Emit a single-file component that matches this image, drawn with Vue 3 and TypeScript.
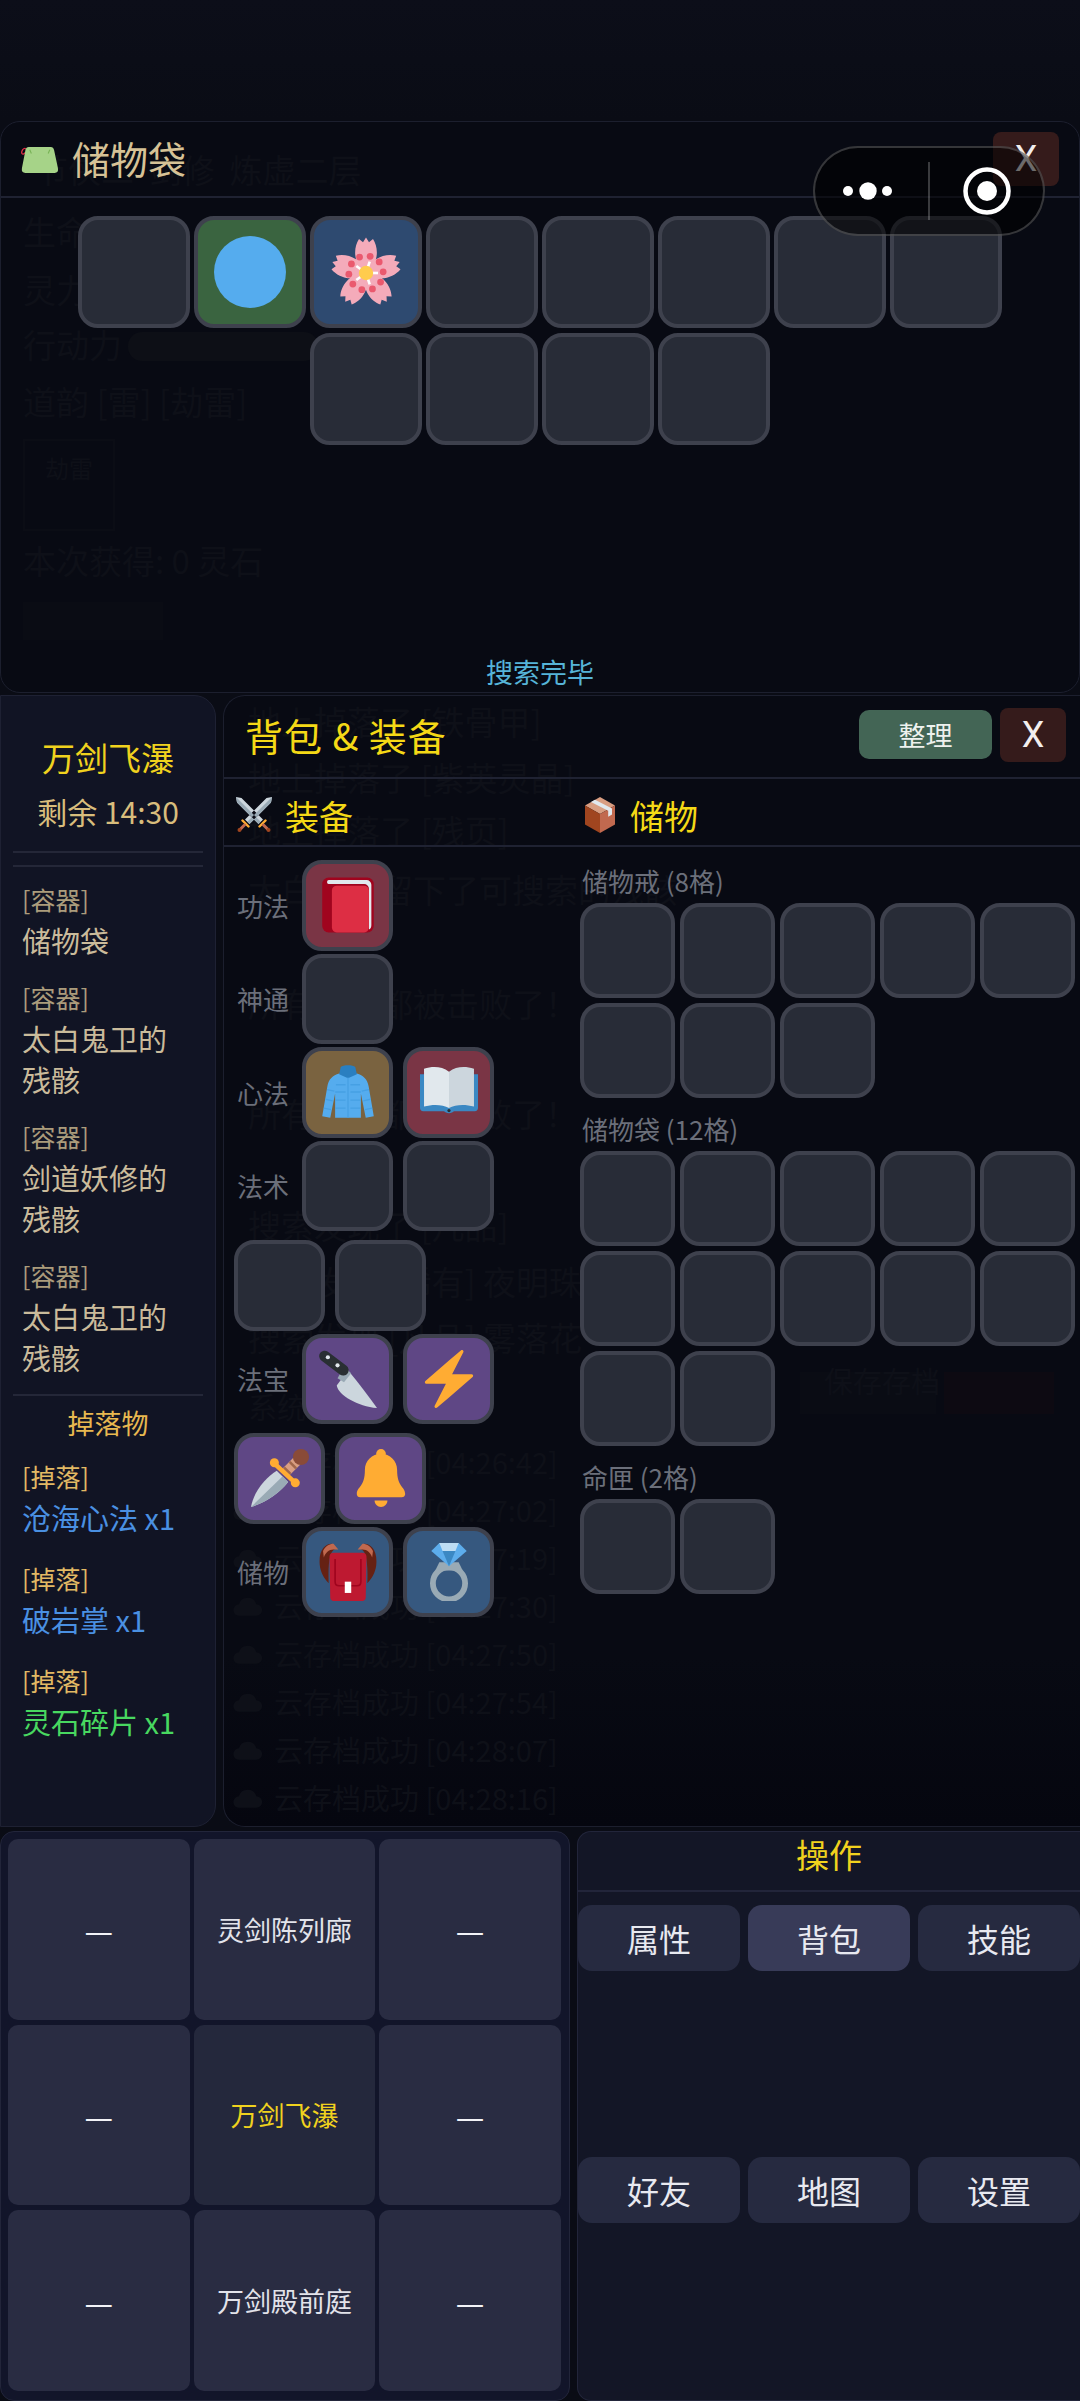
<script setup lang="ts">
type Tone = "none" | "green" | "navy" | "red" | "brown" | "purple" | "blue";

interface Slot {
  tone: Tone
  icon?: string
}

interface EquipRow {
  label: string
  slots: Slot[]
}

interface Ghost {
  text: string
  x: number
  y: number
  size: number
}

const petalAngles = [0, 72, 144, 216, 288];
const blossom = [
  ...petalAngles.map(a => `<path transform="rotate(${a} 18 18.5)" fill="#F4ABBA" d="M18 18.5C11.5 14 11.5 6 14.5 1.5l2 1.6L18 .8l1.5 2.3 2-1.6c3 4.5 3 12.5-3.5 17z"/>`),
  ...[14, 50, 86, 122, 158, 194, 230, 266, 302, 338].map((a) => {
    const r = (a * Math.PI) / 180;
    return `<circle cx="${18 + 8.6 * Math.sin(r)}" cy="${18.5 - 8.6 * Math.cos(r)}" r="1.7" fill="#EA596E"/>`;
  }),
  ...petalAngles.map(a => `<path transform="rotate(${a + 18} 18 18.5)" stroke="#fff" stroke-width="1.3" d="M18 15.500V12.500"/>`),
  `<circle cx="18" cy="18.5" r="3.6" fill="#FFCC4D"/>`,
].join("");

const icons: Record<string, string> = {
  orb: `<circle cx="18" cy="18" r="18" fill="#55ACEE"/>`,
  blossom,
  redBook: `<rect x="2" y="1" width="32" height="34" rx="4" fill="#A0041E"/>
    <path fill="#E1E8ED" d="M6 2.5h23.5a3 3 0 0 1 3 3v25c0 1.500-.8 2.400-1.500 2.700V8a3 3 0 0 0-3-3H6.500a1.200 1.200 0 0 1-.5-2.500z"/>
    <rect x="8" y="6" width="23" height="29" rx="3" fill="#DD2E44"/>`,
  coat: `<path fill="#55ACEE" d="M12.500 6.500 18 8l5.500-1.500c4 1.200 6.500 3.400 7.300 8L34 33l-5 1-3-15v15H10V19L7 34l-5-1 3.200-18.500c.8-4.600 3.300-6.800 7.300-8z"/>
    <path fill="#2A7FC0" d="M13.500 2.500C15 1 21 1 22.500 2.500L23.500 7 18 9.500 12.500 7z"/>
    <path fill="none" stroke="#46A0E4" stroke-width=".8" d="M10.500 13.500h6M19.500 13.500h6M10 18h6.500M19.500 18h6.500M10 23h6.500M19.500 23h6.500M10 28h6.500M19.500 28h6.500M5 16.500l4.500 1M31 16.500l-4.500 1M4 22.500l4.500 1M32 22.500l-4.500 1M3 28l4.500 1M33 28l-4.500 1M18 9v25"/>`,
  openBook: `<path fill="#3B88C3" d="M0 7h36v21c0 1-.8 2-2 2H21c-1 1.500-5 1.500-6 0H2c-1.200 0-2-1-2-2z"/>
    <path fill="#E1E8ED" d="M2.500 3.500C8 2 13.500 2 18 5.500V28c-4-2.400-10-2.500-15.500-1z"/>
    <path fill="#CCD6DD" d="M18 5.500C22.500 2 28 2 33.500 3.500V27C28 25.500 22 25.600 18 28z"/>
    <circle cx="18" cy="29.500" r="1" fill="#292F33"/>`,
  knife: `<path fill="#CCD6DD" d="M18 12.500 11 22c1 6 13 13 25 14-5-7-11-15-18-23.500z"/>
    <path fill="#99AAB5" d="M15.500 10.500 20 14.500l-4.500 5.500-4-2.500z"/>
    <path stroke="#292F33" stroke-width="6.800" stroke-linecap="round" d="M3.500 3.800 15 12.500"/>
    <circle cx="5.500" cy="4.500" r="1.300" fill="#E1E8ED"/><circle cx="11.500" cy="9.500" r="1.300" fill="#E1E8ED"/>`,
  bolt: `<path fill="#FFAC33" d="M32.938 15.651C32.792 15.26 32.418 15 32 15H19.925L26.89 1.458c.219-.426.106-.947-.271-1.244C26.437.071 26.218 0 26 0c-.233 0-.466.082-.653.243L18 6.588 3.347 19.243c-.316.273-.43.714-.284 1.105S3.582 21 4 21h12.075L9.11 34.542c-.219.426-.106.947.271 1.244.182.143.401.214.619.214.233 0 .466-.082.653-.243L18 29.412l14.653-12.655c.317-.273.43-.714.285-1.106z"/>`,
  dagger: `<path fill="#CCD6DD" d="M0 36C1.500 27 8.500 18 16 13.500l7 7C18 27 9 33.500 0 36z"/>
    <path fill="#99AAB5" d="M0 36 19.500 17l3.500 3.500C18 27 9 33.500 0 36z"/>
    <path stroke="#D99E82" stroke-width="6" d="M21 15l8-8"/>
    <path stroke="#A0674B" stroke-width="1.600" d="M20.500 11.500l4 4M24 8l4 4"/>
    <circle cx="31" cy="5" r="5" fill="#8A4B38"/>
    <path stroke="#FFAC33" stroke-width="2.800" stroke-linecap="round" d="M14.500 9 27.500 21"/>
    <circle cx="14.500" cy="8.500" r="2.800" fill="#FFAC33"/><circle cx="27.500" cy="21" r="2.800" fill="#FFAC33"/>`,
  bell: `<path fill="#FFAC33" d="M28 13c0 11 5 10 5 15 0 0 0 2-2 2H5c-2 0-2-2-2-2 0-5 5-4 5-15C8 7.478 12.477 3 18 3s10 4.478 10 10z"/>
    <circle cx="18" cy="3" r="3" fill="#FFAC33"/>
    <path fill="#FFAC33" d="M18 36c2.209 0 4-1.791 4-4h-8c0 2.209 1.791 4 4 4z"/>`,
  backpack: `<path fill="#662113" d="M.5 14C-.5 5 3.500.5 8 .5l3 3C7 4 5.500 10 6 25 3 22 1 18 .5 14zM35.500 14c1-9-3-13.500-7.500-13.500l-3 3c4 .5 5.500 6.500 5 21.500 3-3 5-7 5.500-11z"/>
    <path fill="#C1694F" d="M2.500 5C4 2 6.500.5 9 .5l3 3.500H9C6 4 4 6 3 9zM33.500 5C32 2 29.500.5 27 .5L24 4h3c3 0 5 2 6 5z"/>
    <path fill="#BE1931" d="M9 6h18c1.500 0 2.500 1 2.500 2.500L29 34c0 1-1 2-2 2H9c-1 0-2-1-2-2L6.500 8.500C6.500 7 7.500 6 9 6z"/>
    <path fill="none" stroke="#A0041E" stroke-width="1" d="M10 10v14c0 1.500 1 2.500 2.500 2.500h11c1.500 0 2.500-1 2.500-2.500V10"/>
    <rect x="16" y="24" width="4" height="7" fill="#fff"/>`,
  ring: `<circle cx="18" cy="25" r="10" fill="none" stroke="#99AAB5" stroke-width="3.600"/>
    <path fill="#99AAB5" d="M12 12h12l2.500 5h-17z"/>
    <path fill="#5DADEC" d="M7 5 12 0h12l5 5-11 9.500z"/>
    <path fill="#BDDDF4" d="M12 0h12l-2 5h-8z"/>
    <path fill="#3B88C3" d="M14 5h8l-4 9.500z"/>`,
  clutch: `<path fill="none" stroke="#DD2E44" stroke-width="1.200" d="M5 10.500C2 14 .5 11 2.500 8c1.500-2 4-1.500 3.500 2"/>
    <path fill="#A6D388" d="M8 5.500h20.500c1.500 0 2.500 1 3 3L35 25c.6 3-.6 4.500-3 4.500H5c-2.500 0-3.800-1.500-3.200-4.500L5 8.500c.5-2 1.500-3 3-3z"/>
    <path stroke="#77B255" stroke-width="1" d="M9 8l1.500 3.500M27.500 8 26 11.500"/>`,
  swords: `<path fill="#CCD6DD" d="M36 0l-1 5.500L13.500 27 9 22.500 30.500 1zM0 0l1 5.500L22.500 27l4.500-4.500L5.500 1z"/>
    <path fill="#99AAB5" d="M36 0l-1 5.500L13.500 27l-2.200-2.200zM0 0l1 5.500L22.500 27l2.200-2.200z"/>
    <path stroke="#FFAC33" stroke-width="2.400" stroke-linecap="round" d="M6.500 23.500l6 6M29.500 23.500l-6 6"/>
    <path stroke="#C1694F" stroke-width="3" stroke-linecap="round" d="M8.500 28 4 32.500M27.500 28l4.500 4.500"/>
    <circle cx="3.500" cy="33" r="2" fill="#A0451F"/><circle cx="32.500" cy="33" r="2" fill="#A0451F"/>`,
  box: `<path fill="#D99E82" d="M18 0 33 8.500 18 17 3 8.500z"/>
    <path fill="#A0451F" d="M3 8.500 18 17v19L3 27.500z"/>
    <path fill="#C1694F" d="M33 8.500 18 17v19l15-8.500z"/>
    <path fill="#E1E8ED" d="M9 5 13 2.800 30 11.500v6l-3.800 2.200v-6z"/>`,
};

const empty = (n: number): Slot[] => Array.from({ length: n }, () => ({ tone: "none" as Tone }));

const bagSlots: Slot[] = [
  { tone: "none" },
  { tone: "green", icon: "orb" },
  { tone: "navy", icon: "blossom" },
  ...empty(9),
];

const equipRows: EquipRow[] = [
  { label: "功法", slots: [{ tone: "red", icon: "redBook" }] },
  { label: "神通", slots: empty(1) },
  { label: "心法", slots: [{ tone: "brown", icon: "coat" }, { tone: "red", icon: "openBook" }] },
  { label: "法术", slots: empty(4) },
  {
    label: "法宝",
    slots: [
      { tone: "purple", icon: "knife" },
      { tone: "purple", icon: "bolt" },
      { tone: "purple", icon: "dagger" },
      { tone: "purple", icon: "bell" },
    ],
  },
  { label: "储物", slots: [{ tone: "blue", icon: "backpack" }, { tone: "blue", icon: "ring" }] },
];

const storage = [
  { label: "储物戒 (8格)", count: 8 },
  { label: "储物袋 (12格)", count: 12 },
  { label: "命匣 (2格)", count: 2 },
];

const containers = ["储物袋", "太白鬼卫的残骸", "剑道妖修的残骸", "太白鬼卫的残骸"];

const drops = [
  { name: "沧海心法 x1", color: "#4a90e2" },
  { name: "破岩掌 x1", color: "#4a90e2" },
  { name: "灵石碎片 x1", color: "#48d860" },
];

const navCells = ["—", "灵剑陈列廊", "—", "—", "万剑飞瀑", "—", "—", "万剑殿前庭", "—"];
const actions = ["属性", "背包", "技能", "好友", "地图", "设置"];

// 遮罩后面隐约能看到的主界面文字，y 是相对所在面板的位置
const topGhosts: Ghost[] = [
  { text: "节侠二\u00a0\u00a0剑修\u00a0\u00a0炼虚二层", x: 34, y: 26, size: 33 },
  { text: "生命", x: 22, y: 88, size: 33 },
  { text: "灵力", x: 22, y: 146, size: 33 },
  { text: "行动力", x: 22, y: 201, size: 33 },
  { text: "100%", x: 214, y: 208, size: 24 },
  { text: "道韵 [雷] [劫雷]", x: 22, y: 258, size: 33 },
  { text: "劫雷", x: 44, y: 330, size: 24 },
  { text: "本次获得: 0 灵石", x: 22, y: 417, size: 33 },
  { text: "离开秘境", x: 36, y: 480, size: 28 },
];

const logTimes = ["04:26:42", "04:27:02", "04:27:19", "04:27:30", "04:27:50", "04:27:54", "04:28:07", "04:28:16"];

const logGhosts: Ghost[] = [
  { text: "地上掉落了 [铁骨甲]", x: 24, y: 4, size: 33 },
  { text: "地上掉落了 [紫英灵晶]", x: 24, y: 60, size: 33 },
  { text: "地上掉落了 [残页]", x: 24, y: 113, size: 33 },
  { text: "太白鬼卫留下了可搜索的残骸", x: 24, y: 172, size: 33 },
  { text: "所有敌人都被击败了！", x: 24, y: 286, size: 33 },
  { text: "所有敌人都被击败了！", x: 24, y: 396, size: 33 },
  { text: "搜索发现了 [凡品]", x: 24, y: 508, size: 33 },
  { text: "搜索发现 [稀有] 夜明珠", x: 24, y: 564, size: 33 },
  { text: "搜索发现 [凡品] 雾落花", x: 24, y: 620, size: 33 },
  { text: "系统", x: 24, y: 692, size: 29 },
  { text: "保存存档", x: 600, y: 666, size: 29 },
  ...logTimes.map((t, i) => ({
    text: `云存档成功 [${t}]`,
    x: 50,
    y: 747 + i * 48,
    size: 29,
  })),
];

const ghostStyle = (g: Ghost) => ({
  left: `${g.x}px`,
  top: `${g.y}px`,
  fontSize: `${g.size}px`,
});
</script>

<template>
  <div class="screen">
    <section class="loot-panel">
      <div class="ghosts">
        <span v-for="g in topGhosts" :key="g.y + g.text" class="ghost" :style="ghostStyle(g)">{{ g.text }}</span>
        <i class="ghost-bar" />
        <i class="ghost-card" />
        <i class="ghost-btn" />
      </div>
      <header class="loot-head">
        <svg class="bag-icon" viewBox="0 0 36 36" v-html="icons.clutch" />
        <h2>储物袋</h2>
        <button class="close">X</button>
      </header>
      <div class="loot-grid">
        <div v-for="(s, i) in bagSlots" :key="i" class="slot big" :class="s.tone">
          <svg v-if="s.icon" viewBox="0 0 36 36" v-html="icons[s.icon]" />
        </div>
      </div>
      <p class="loot-status">搜索完毕</p>
    </section>

    <main class="middle">
      <aside class="side">
        <h3 class="map-name">万剑飞瀑</h3>
        <p class="timer">剩余 14:30</p>
        <hr>
        <hr class="second">
        <div class="containers">
          <div v-for="(c, i) in containers" :key="i" class="entry">
            <div class="tag">[容器]</div>
            <div class="name">{{ c }}</div>
          </div>
        </div>
        <hr class="tight">
        <h4 class="drops-title">掉落物</h4>
        <div v-for="d in drops" :key="d.name" class="entry drop">
          <div class="tag gold">[掉落]</div>
          <div class="name" :style="{ color: d.color }">{{ d.name }}</div>
        </div>
      </aside>

      <section class="pack">
        <div class="ghosts">
          <i class="ghost-save" />
          <i class="ghost-chat" />
          <span v-for="g in logGhosts" :key="g.y" class="ghost" :style="ghostStyle(g)">{{ g.text }}</span>
          <svg
            v-for="(t, i) in logTimes"
            :key="t"
            class="ghost-cloud"
            :style="{ top: `${750 + i * 48}px` }"
            viewBox="0 0 36 30"
          >
            <path d="M8 28a7 7 0 0 1-1-14 11 11 0 0 1 21 0 7 7 0 0 1 0 14z" />
          </svg>
        </div>
        <header class="pack-head">
          <h2>背包 &amp; 装备</h2>
          <button class="tidy">整理</button>
          <button class="close">X</button>
        </header>
        <div class="pack-cols">
          <div class="equip">
            <div class="col-head">
              <svg class="head-icon" viewBox="0 0 36 36" v-html="icons.swords" />
              <span>装备</span>
            </div>
            <div class="equip-list">
              <div v-for="row in equipRows" :key="row.label" class="equip-row">
                <span class="equip-label">{{ row.label }}</span>
                <div v-for="(s, i) in row.slots" :key="i" class="slot small" :class="s.tone">
                  <svg v-if="s.icon" viewBox="0 0 36 36" v-html="icons[s.icon]" />
                </div>
              </div>
            </div>
          </div>
          <div class="store">
            <div class="col-head store-head">
              <svg class="head-icon" viewBox="0 0 36 36" v-html="icons.box" />
              <span>储物</span>
            </div>
            <div class="store-list">
              <div v-for="group in storage" :key="group.label" class="store-group">
                <div class="store-label">{{ group.label }}</div>
                <div class="store-grid">
                  <div v-for="n in group.count" :key="n" class="slot medium none" />
                </div>
              </div>
            </div>
          </div>
        </div>
      </section>
    </main>

    <footer class="bottom">
      <div class="nav-panel">
        <button
          v-for="(c, i) in navCells"
          :key="i"
          class="nav-cell"
          :class="{ here: i === 4, dash: c === '—' }"
        >
          {{ c }}
        </button>
      </div>
      <div class="actions">
        <div class="actions-title">操作</div>
        <div class="actions-grid">
          <button v-for="a in actions" :key="a" class="action" :class="{ on: a === '背包' }">{{ a }}</button>
        </div>
      </div>
    </footer>

    <div class="capsule">
      <div class="capsule-part">
        <svg width="60" height="20" viewBox="0 0 60 20">
          <circle cx="6" cy="10" r="5" fill="#fff" />
          <circle cx="26" cy="10" r="8.700" fill="#fff" />
          <circle cx="45" cy="10" r="5" fill="#fff" />
        </svg>
      </div>
      <i class="capsule-line" />
      <div class="capsule-part">
        <svg width="50" height="50" viewBox="0 0 50 50">
          <circle cx="25" cy="25" r="21.500" fill="none" stroke="#fff" stroke-width="4.500" />
          <circle cx="25" cy="25" r="10" fill="#fff" />
        </svg>
      </div>
    </div>
  </div>
</template>

<style scoped>
.screen {
  position: relative;
  width: 1080px;
  height: 2401px;
  padding-top: 121px;
  box-sizing: border-box;
  overflow: hidden;
  background: linear-gradient(#0c0e19, #0a0c15 120px);
  font-family: "Noto Sans CJK SC", "Noto Sans", sans-serif;
  color: #e6e7ee;
}

h2, h3, h4, p, hr {
  margin: 0;
  font-weight: 400;
}

button {
  padding: 0;
  border: none;
  font-family: inherit;
  color: inherit;
}

.ghosts {
  position: absolute;
  inset: 0;
  overflow: hidden;
}

.ghost {
  position: absolute;
  white-space: nowrap;
  line-height: 1.3;
  color: #0e1018;
}

.ghost-bar {
  position: absolute;
  left: 127px;
  top: 210px;
  width: 190px;
  height: 29px;
  border-radius: 14px;
  background: #0d0f16;
}

.ghost-card {
  position: absolute;
  left: 22px;
  top: 317px;
  width: 88px;
  height: 88px;
  border: 2px solid #0b0d15;
}

.ghost-btn {
  position: absolute;
  left: 22px;
  top: 480px;
  width: 140px;
  height: 38px;
  background: #0a0c14;
}

.ghost-save {
  position: absolute;
  left: 576px;
  top: 676px;
  width: 136px;
  height: 42px;
  background: #0a0c14;
}

.ghost-chat {
  position: absolute;
  left: 720px;
  top: 676px;
  width: 110px;
  height: 42px;
  background: #0d0a12;
}

.ghost-cloud {
  position: absolute;
  left: 9px;
  width: 30px;
  height: 30px;
  fill: #0e1018;
}

.loot-panel {
  position: relative;
  display: flex;
  flex-direction: column;
  height: 572px;
  box-sizing: border-box;
  border: 1px solid #1c1f2e;
  border-radius: 20px;
  background: #080a13;
}

.loot-head {
  position: relative;
  display: flex;
  align-items: center;
  height: 74px;
  flex: none;
  padding: 0 20px 0 19px;
  border-bottom: 2px solid #1f2232;
}

.bag-icon {
  width: 39px;
  height: 39px;
  margin: 3px 13px 0 0;
}

.loot-head h2 {
  margin-top: -4px;
  font-size: 38px;
  color: #d6c296;
}

.close {
  width: 66px;
  height: 54px;
  margin-left: auto;
  border-radius: 8px;
  background: #351b1b;
  font-family: Roboto, sans-serif;
  font-size: 36px;
  color: #f2eeee;
}

.loot-grid {
  position: relative;
  display: flex;
  flex-wrap: wrap;
  justify-content: center;
  gap: 5px 4px;
  padding: 18px 70px 0;
}

.slot {
  display: flex;
  align-items: center;
  justify-content: center;
  box-sizing: border-box;
  border: 4px solid #3e414d;
  border-radius: 20px;
  background: #282c37;
}

.slot.big {
  width: 112px;
  height: 112px;
}

.slot.big svg {
  width: 72px;
  height: 72px;
}

.slot.small {
  width: 91px;
  height: 90.500px;
}

.slot.small svg {
  width: 58px;
  height: 58px;
}

.slot.medium {
  width: 95px;
  height: 95px;
}

.slot.green { background: #3a6440; }
.slot.navy { background: #2e4a70; }
.slot.red { background: #7a3545; }
.slot.brown { background: #7a6340; }
.slot.purple { background: #5f4785; }
.slot.blue { background: #36587f; }

.loot-status {
  position: relative;
  margin-top: auto;
  padding-bottom: 4px;
  font-size: 27px;
  line-height: 32px;
  text-align: center;
  color: #56b4d8;
}

.middle {
  display: flex;
  gap: 7px;
  height: 1132px;
  margin-top: 2px;
}

.side {
  width: 216px;
  flex: none;
  box-sizing: border-box;
  padding: 39px 12px 0;
  border: 1px solid #1e2133;
  border-radius: 0 22px 22px 0;
  background: #111424;
}

.map-name {
  font-size: 33px;
  line-height: 44px;
  text-align: center;
  color: #f0d21e;
}

.timer {
  margin-top: 12px;
  font-size: 30px;
  line-height: 40px;
  text-align: center;
  color: #d8bd7c;
}

.side hr {
  height: 2px;
  margin-top: 20px;
  border: none;
  background: #242738;
}

.side hr.second {
  margin-top: 12px;
}

.side hr.tight {
  margin-top: -2px;
}

.containers {
  padding-top: 14px;
}

.entry {
  padding: 0 12px 0 9px;
  margin-bottom: 18px;
}

.tag {
  margin-bottom: 3px;
  font-size: 25px;
  line-height: 36px;
  color: #ab9c7c;
}

.tag.gold {
  color: #e2b964;
}

.name {
  font-size: 29px;
  line-height: 41px;
  color: #cabb9b;
}

.drops-title {
  margin: 7px 0 15px;
  font-size: 27px;
  line-height: 40px;
  text-align: center;
  color: #e8b850;
}

.drop {
  margin-bottom: 22px;
}

.pack {
  position: relative;
  flex: 1;
  min-width: 0;
  border: 1px solid #1c1f2e;
  border-right: none;
  border-radius: 22px 0 0 22px;
  background: linear-gradient(#080a13 85%, #05060f);
}

.pack-head {
  position: relative;
  display: flex;
  align-items: center;
  height: 83px;
  box-sizing: border-box;
  padding: 0 14px 4px 21px;
  border-bottom: 2px solid #1f2232;
}

.pack-head h2 {
  flex: 1;
  font-size: 38px;
  letter-spacing: 1px;
  color: #f5d916;
}

.tidy {
  width: 133px;
  height: 49px;
  margin-right: 8px;
  border-radius: 10px;
  background: #436555;
  font-size: 27px;
  color: #eef1ee;
}

.pack-head .close {
  margin-left: 0;
}

.pack-cols {
  position: relative;
  display: grid;
  grid-template-columns: 351px 1fr;
}

.col-head {
  display: flex;
  align-items: center;
  gap: 13px;
  height: 68px;
  box-sizing: border-box;
  padding: 6px 0 0 12px;
  border-bottom: 2px solid #1f2232;
  font-size: 34px;
  color: #f5d916;
}

.head-icon {
  width: 36px;
  height: 36px;
}

.store-head {
  gap: 12px;
  padding-left: 7px;
}

.equip-list {
  padding: 13px 0 0 10px;
}

.equip-row {
  display: flex;
  flex-wrap: wrap;
  align-items: center;
  gap: 9px 10px;
  margin-bottom: 3px;
}

.equip-label {
  width: 58px;
  font-size: 26px;
  text-align: center;
  color: #6b6f7a;
}

.store-list {
  padding: 16px 0 0 5px;
}

.store-group {
  margin-bottom: 13px;
}

.store-label {
  margin-bottom: 4px;
  padding-left: 2px;
  font-size: 26px;
  line-height: 36px;
  color: #6b6f7a;
}

.store-grid {
  display: grid;
  grid-template-columns: repeat(5, 95px);
  gap: 5px;
}

.bottom {
  display: flex;
  gap: 7px;
  height: 570px;
  margin-top: 4px;
}

.nav-panel {
  display: grid;
  grid-template-columns: repeat(3, 1fr);
  grid-template-rows: repeat(3, 1fr);
  gap: 5px 4px;
  width: 570px;
  flex: none;
  box-sizing: border-box;
  padding: 7px 8px 9px 7px;
  border: 1px solid #22253a;
  border-radius: 14px;
  background: #12152a;
}

.nav-cell {
  border-radius: 10px;
  background: #292c42;
  font-size: 27px;
  color: #e2e3ea;
}

.nav-cell.dash {
  font-size: 32px;
  color: #f2f3f7;
}

.nav-cell.here {
  background: #24283c;
  color: #f0d21e;
}

.actions {
  flex: 1;
  display: flex;
  flex-direction: column;
  min-width: 0;
  border: 1px solid #22253a;
  border-right: none;
  border-radius: 14px 0 0 14px;
  background: #131626;
}

.actions-title {
  flex: none;
  height: 60px;
  box-sizing: border-box;
  border-bottom: 2px solid #22253a;
  font-size: 33px;
  line-height: 44px;
  text-align: center;
  color: #f0d21e;
}

.actions-grid {
  flex: 1;
  display: grid;
  grid-template-columns: repeat(3, 1fr);
  grid-template-rows: repeat(2, 1fr);
  align-items: start;
  gap: 8px;
  padding-top: 13px;
}

.action {
  height: 66px;
  border-radius: 14px;
  background: #262a40;
  font-size: 32px;
  color: #e8e9f0;
}

.action.on {
  background: #383b58;
}

.capsule {
  position: absolute;
  left: 813px;
  top: 146px;
  display: flex;
  align-items: center;
  width: 232px;
  height: 90px;
  box-sizing: border-box;
  border: 2px solid rgba(255, 255, 255, 0.2);
  border-radius: 45px;
  background: rgba(0, 0, 0, 0.55);
}

.capsule-part {
  flex: 1;
  display: flex;
  align-items: center;
  justify-content: center;
}

.capsule-line {
  width: 2px;
  height: 58px;
  background: rgba(255, 255, 255, 0.22);
}
</style>

<style>
html, body {
  margin: 0;
  background: #0a0c15;
}
</style>
